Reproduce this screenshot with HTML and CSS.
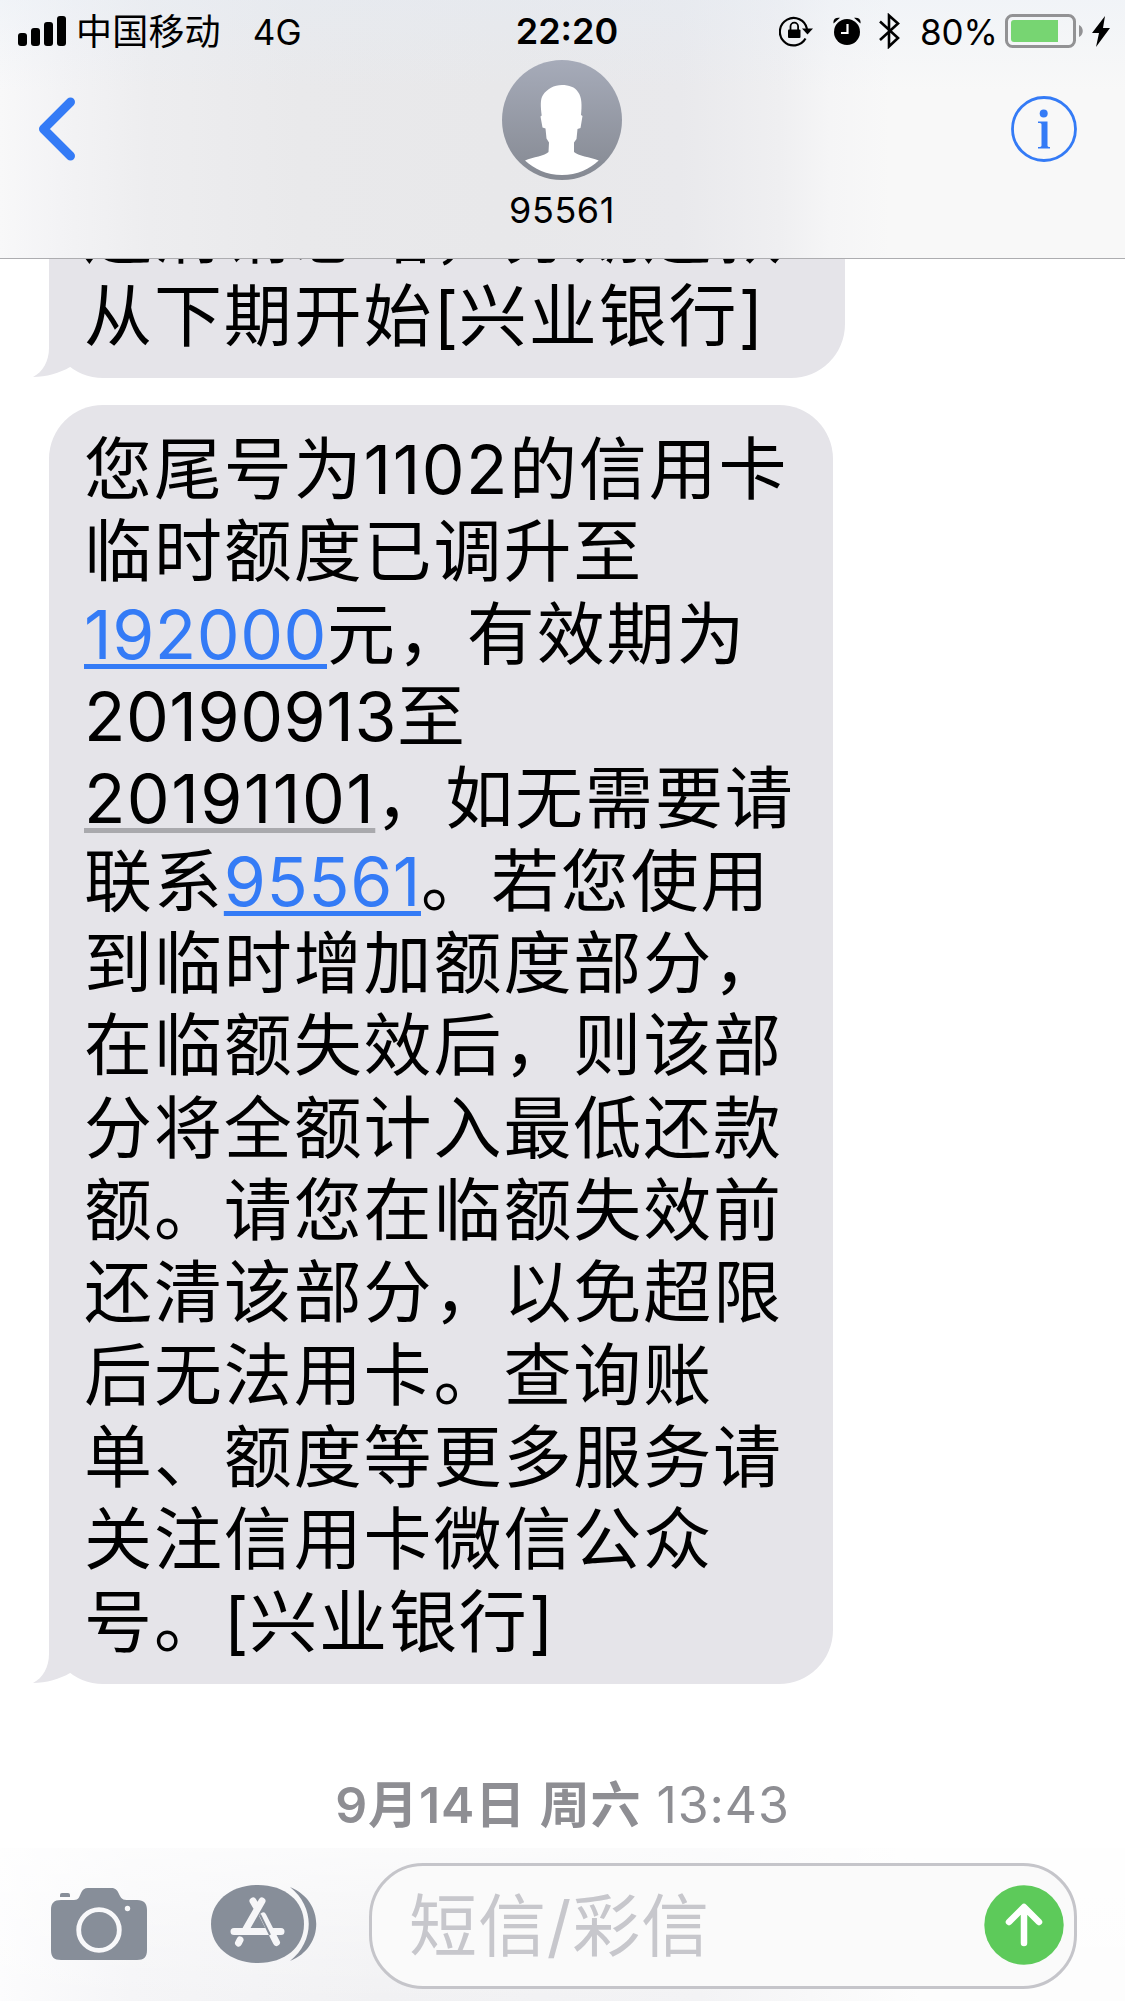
FILE: index.html
```html
<!DOCTYPE html>
<html lang="zh-CN">
<head>
  <meta charset="UTF-8">
  <meta name="viewport" content="width=device-width, initial-scale=1.0">
  <title>95561</title>
  <link rel="stylesheet" href="styles.css">
</head>
<body>

  <header class="header">
    <!-- Status bar -->
    <div class="status">
      <div class="status-left">
        <svg class="signal" width="48" height="30" viewBox="0 0 48 30">
          <rect x="0" y="17" width="9" height="13" rx="3"/>
          <rect x="13" y="12" width="9" height="18" rx="3"/>
          <rect x="26" y="6" width="9" height="24" rx="3"/>
          <rect x="39" y="0" width="9" height="30" rx="3"/>
        </svg>
        <span class="carrier">中国移动</span>
        <span class="network">4G</span>
      </div>
      <div class="clock">22:20</div>
      <div class="status-right">
        <svg class="lock" width="34" height="32" viewBox="0 0 34 32">
          <path d="M26.5 23.500A13.700 13.700 0 1 1 28 14" fill="none" stroke="#000" stroke-width="2.200"/>
          <path d="M23 13.500h11l-5.500 6z"/>
          <rect x="9" y="14.500" width="12.500" height="8.500" rx="1"/>
          <path d="M11.500 15v-3.500a3.800 3.800 0 0 1 7.600 0V15" fill="none" stroke="#000" stroke-width="1.800"/>
        </svg>
        <svg class="alarm" width="28" height="29" viewBox="0 0 28 29">
          <circle cx="14" cy="15" r="13"/>
          <path d="M.6 6.500C-.4 2 3 0 7 .8zM27.400 6.500C28.400 2 25 0 21 .8z"/>
          <path d="M14.500 7v9H8" fill="none" stroke="#fff" stroke-width="2.200"/>
        </svg>
        <svg class="bluetooth" width="21" height="36" viewBox="0 0 21 36">
          <path d="M1 8.500 19 25 10 33.500V2.500L19 10.500 1 27" fill="none" stroke="#000" stroke-width="2.600"/>
        </svg>
        <span class="percent">80%</span>
        <svg class="battery" width="78" height="34" viewBox="0 0 78 34">
          <rect x="1.500" y="1.500" width="68" height="31" rx="6" fill="none" stroke="#929294" stroke-width="3"/>
          <path d="M9 6h44v22H9a3 3 0 0 1-3-3V9a3 3 0 0 1 3-3z" fill="#77d572"/>
          <path d="M74 11c5 2 5 10 0 12z" fill="#929294"/>
        </svg>
        <svg class="bolt" width="18" height="31" viewBox="0 0 18 31">
          <path d="M13 0 0 17h7L4 31 18 12h-7z"/>
        </svg>
      </div>
    </div>

    <!-- Navigation bar -->
    <div class="nav">
      <svg class="back" width="40" height="66" viewBox="0 0 40 66">
        <path d="M33.500 6 6.500 33l27 27" fill="none" stroke="#347bf6" stroke-width="9" stroke-linecap="round" stroke-linejoin="round"/>
      </svg>
      <div class="contact">
        <svg class="avatar" width="120" height="120" viewBox="0 0 120 120">
          <defs>
            <linearGradient id="avatar-bg" x1="0" y1="0" x2="0" y2="1">
              <stop offset="0" stop-color="#a6abb9"/>
              <stop offset="1" stop-color="#858992"/>
            </linearGradient>
          </defs>
          <circle cx="60" cy="60" r="60" fill="url(#avatar-bg)"/>
          <path d="M60 25c7 0 13 2 16 7 4 5 4 14 3 23l1.500 1-2 12-3 1-1 10-2.500 3.500v9.500c4 4 16 5 24.700 8.500C88 109 75 115 60 115S32 109 23 100.500C31 97 43 96 46.500 92l.5-9.500-2.500-4-1-10-3-1-2-11 1.200-1c-1-9-1.700-16 1.300-20.500C45 29 52 25 60 25z" fill="#fff"/>
        </svg>
        <span class="name">95561</span>
      </div>
      <svg class="info" width="66" height="66" viewBox="0 0 66 66" fill="#347bf6">
        <circle cx="33" cy="33" r="31.500" fill="none" stroke="#347bf6" stroke-width="2.800"/>
        <circle cx="32.700" cy="17.500" r="4"/>
        <path d="M27 25.500h9.500V49.500c0 1 1 1.500 2.500 1.500v1.500H27V51c2.500 0 3.500-.5 3.500-1.500V28.500c0-1.200-1-1.500-3.500-1.500z"/>
      </svg>
    </div>
  </header>

  <main class="messages">
    <div class="bubble bubble-first">
      还清请忽略，分期还款<br>
      从下期开始<span class="bracket">[</span>兴业银行<span class="bracket">]</span>
      <svg class="tail" width="50" height="64" viewBox="0 0 50 64">
        <path d="M16 0v34C16 47 10 58 0 63c13 0 27-4 37-10L48 46V0z"/>
      </svg>
    </div>

    <div class="bubble bubble-second">
      您尾号为<span class="num wide">1102</span>的信用卡<br>
      临时额度已调升至<br>
      <a class="num link">192000</a>元，有效期为<br>
      <span class="num">20190913</span>至<br>
      <span class="num wide date">20191101</span>，如无需要请<br>
      联系<a class="num link">95561</a>。若您使用<br>
      到临时增加额度部分，<br>
      在临额失效后，则该部<br>
      分将全额计入最低还款<br>
      额。请您在临额失效前<br>
      还清该部分，以免超限<br>
      后无法用卡。查询账<br>
      单、额度等更多服务请<br>
      关注信用卡微信公众<br>
      号。<span class="bracket">[</span>兴业银行<span class="bracket">]</span>
      <svg class="tail" width="50" height="64" viewBox="0 0 50 64">
        <path d="M16 0v34C16 47 10 58 0 63c13 0 27-4 37-10L48 46V0z"/>
      </svg>
    </div>

    <div class="timestamp"><b>9月14日 周六</b> 13:43</div>
  </main>

  <footer class="composer">
    <svg class="camera" width="96" height="72" viewBox="0 0 96 72">
      <path d="M10 12h13c5 0 5-3 7-7 1.500-3.500 3.500-5 7-5h23c4 0 6 1.500 7.500 5 2 4 3 7 8 7H86c7 0 10 3.500 10 10v40c0 7-3 10-10 10H10C3 72 0 69 0 62V22c0-7 3-10 10-10z" fill="#878e99"/>
      <path d="M11 5h6q2 0 2 2v2H9V7q0-2 2-2z" fill="#878e99"/>
      <circle cx="48" cy="42" r="20.300" fill="none" stroke="#f8f8fa" stroke-width="4.800"/>
      <circle cx="76.500" cy="20.500" r="2.700" fill="#f8f8fa"/>
    </svg>
    <svg class="apps" width="106" height="78" viewBox="0 0 106 78">
      <path d="M47 0c27 0 46 16 46 39S74 78 47 78 0 62 0 39 20 0 47 0z" fill="#878e99"/>
      <path d="M79 2c35 14 35 60 0 74 25-20 25-54 0-74z" fill="#878e99"/>
      <g fill="none" stroke="#f6f6f8" stroke-linecap="round" stroke-width="7">
        <path d="M23 46.500h47M51 16 35 44M42 16l3.500 6M52 31l13.500 26.500M29 55l-1.500 3"/>
      </g>
      <path d="M49 29.500 59 50" fill="none" stroke="#878e99" stroke-width="2"/>
    </svg>
    <div class="field">
      <span class="placeholder">短信/彩信</span>
      <svg class="send" width="80" height="80" viewBox="0 0 80 80">
        <circle cx="40" cy="40" r="39.700" fill="#5dca5a"/>
        <path d="M40 58V23M25 37l15-15 15 15" fill="none" stroke="#fff" stroke-width="6.500" stroke-linecap="round" stroke-linejoin="round"/>
      </svg>
    </div>
  </footer>

</body>
</html>
```

FILE: styles.css
```css
* {
  box-sizing: border-box;
}

body {
  margin: 0;
  width: 1125px;
  height: 2001px;
  overflow: hidden;
  display: flex;
  flex-direction: column;
  background: #fff;
  color: #000;
  font-family: Inter, "Noto Sans CJK SC", sans-serif;
}

svg {
  display: block;
  flex: none;
}

/* Header */
.header {
  flex: none;
  height: 259px;
  border-bottom: 1px solid #adadb0;
  background:
    linear-gradient(to bottom, rgba(228, 236, 246, 0.35), rgba(228, 236, 246, 0) 90px),
    linear-gradient(to right, #f8f8f9 0, #f3f3f5 60px, #ededef 150px, #e9e9eb 300px, #e8e8ea 500px, #e9e9ec 680px, #efeff1 780px, #f5f5f6 830px, #f8f8f8 890px);
}

.status {
  height: 60px;
  display: grid;
  grid-template-columns: 1fr auto 1fr;
  align-items: center;
  padding: 0 15px 0 18px;
  font-size: 36px;
  line-height: 60px;
}

.status-left,
.status-right {
  display: flex;
  align-items: center;
}

.status-right {
  justify-content: flex-end;
}

.carrier {
  margin: 1px 0 0 10px;
  letter-spacing: 0.2px;
}

.network {
  margin: 2px 0 0 32px;
  font-size: 35px;
}

.clock {
  font-weight: 600;
  padding-left: 6px;
}

.alarm {
  margin-left: 20px;
}

.bluetooth {
  margin-left: 18px;
}

.percent {
  margin: 1px 7px 0 20px;
  font-size: 35px;
}

.bolt {
  margin-left: 9px;
}

/* Navigation */
.nav {
  display: grid;
  grid-template-columns: 1fr auto 1fr;
  padding: 0 48px 0 37px;
}

.back,
.info {
  margin-top: 36px;
}

.info {
  justify-self: end;
}

.contact {
  display: flex;
  flex-direction: column;
  align-items: center;
  padding-left: 10px;
}

.name {
  margin-top: 8px;
  font-size: 36px;
  line-height: 44px;
  letter-spacing: 0.6px;
}

/* Messages */
.messages {
  flex: 1;
  min-height: 0;
  overflow: hidden;
  display: flex;
  flex-direction: column;
  justify-content: flex-end;
  align-items: flex-start;
  padding-left: 49px;
}

.bubble {
  flex: none;
  position: relative;
  padding: 23px 0 21px 35px;
  border-radius: 54px;
  background: #e5e4e9;
  font-size: 68px;
  line-height: 82.33px;
  letter-spacing: 1.9px;
  white-space: nowrap;
}

.bubble-first {
  width: 796px;
}

.bubble-second {
  width: 784px;
  margin-top: 27px;
}

.tail {
  position: absolute;
  left: -16px;
  bottom: 0;
  fill: #e5e4e9;
}

.bracket {
  letter-spacing: 0.5px;
}

.num {
  letter-spacing: 0.5px;
}

.wide {
  letter-spacing: 1.4px;
}

.link {
  color: #347bf6;
  text-decoration: underline;
  text-decoration-thickness: 5px;
  text-underline-offset: 5px;
}

.date {
  text-decoration: underline;
  text-decoration-color: #a9a9ad;
  text-decoration-thickness: 5px;
  text-underline-offset: 5px;
}

.timestamp {
  flex: none;
  align-self: stretch;
  margin: 85px 0 7px;
  padding-right: 49px;
  text-align: center;
  color: #8e8e93;
  font-size: 50px;
  line-height: 72px;
  letter-spacing: 0.9px;
}

.timestamp b {
  font-weight: 600;
}

/* Input bar */
.composer {
  flex: none;
  height: 153px;
  display: flex;
  align-items: flex-start;
  padding: 15px 48px 0 51px;
  background:
    linear-gradient(to bottom, rgba(255, 255, 255, 0.7), rgba(255, 255, 255, 0)),
    linear-gradient(to right, #fcfcfd 0, #f5f5f7 130px, #f1f1f3 380px, #f3f3f5 700px, #fdfdfd 920px);
}

.camera {
  margin-top: 25px;
}

.apps {
  margin: 22px 0 0 64px;
}

.field {
  flex: 1;
  margin-left: 52px;
  height: 126px;
  display: flex;
  align-items: center;
  justify-content: space-between;
  padding: 0 10px 3px 37px;
  border: 3px solid #c5c5ca;
  border-radius: 54px;
  background: #fafafa;
}

.placeholder {
  padding-top: 3px;
  color: #c7c7cc;
  font-size: 68px;
  line-height: 82px;
  letter-spacing: 0.9px;
}
```
